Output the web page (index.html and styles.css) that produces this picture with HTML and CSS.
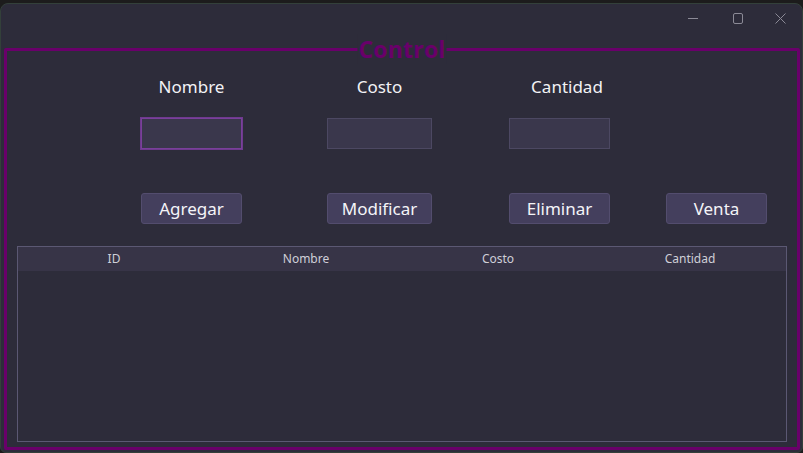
FILE: index.html
```html
<!DOCTYPE html>
<html>
<head>
<meta charset="utf-8">
<link rel="stylesheet" href="styles.css">
</head>
<body>
<div class="window">
  <div class="titlebar">
    <svg class="tb-icon tb-min" width="10" height="11" viewBox="0 0 10 11"><path d="M0 5.5H10" stroke="#8b8a96" stroke-width="1"/></svg>
    <svg class="tb-icon tb-max" width="10" height="11" viewBox="0 0 10 11"><rect x="0.5" y="0.5" width="9" height="10" rx="1.5" fill="none" stroke="#8b8a96" stroke-width="1"/></svg>
    <svg class="tb-icon" width="11" height="11" viewBox="0 0 11 11"><path d="M0.5 0.5L10.5 10.5M10.5 0.5L0.5 10.5" stroke="#8b8a96" stroke-width="1"/></svg>
  </div>
  <div class="group">
    <div class="group-title">Control</div>
    <div class="form">
      <div class="lbl ca">Nombre</div>
      <div class="lbl cb">Costo</div>
      <div class="lbl cc lbl-shift">Cantidad</div>

      <div class="field field-focus ca r2"></div>
      <div class="field cb r2"></div>
      <div class="field cc r2"></div>

      <div class="btn ca r3">Agregar</div>
      <div class="btn cb r3">Modificar</div>
      <div class="btn cc r3">Eliminar</div>
      <div class="btn cd r3">Venta</div>
    </div>
    <div class="table">
      <div class="thead">
        <div>ID</div>
        <div>Nombre</div>
        <div>Costo</div>
        <div>Cantidad</div>
      </div>
    </div>
  </div>
</div>
</body>
</html>
```

FILE: styles.css
```css
* { box-sizing: border-box; }
html, body { margin: 0; padding: 0; }
body {
  background: #1c1c1c;
  width: 803px;
  height: 453px;
  overflow: hidden;
  font-family: "Noto Sans", "Open Sans", sans-serif;
}
.window {
  margin-top: 3px;
  width: 803px;
  height: 450px;
  background: #2d2c3a;
  border: 1px solid #33403a;
  border-radius: 8px 8px 6px 6px;
  display: flex;
  flex-direction: column;
}
.titlebar {
  height: 44px;
  display: flex;
  justify-content: flex-end;
  align-items: flex-start;
  padding-top: 9px;
  padding-right: 16px;
}
.tb-icon { display: block; }
.tb-min { margin-right: 35px; }
.tb-max { margin-right: 32px; }
.group {
  position: relative;
  margin: 0 2px 2px 3px;
  flex: 1;
  border: 3px solid #69006a;
  border-radius: 2px;
  padding: 0 10px 5px 10px;
  display: flex;
  flex-direction: column;
}
.group-title {
  position: absolute;
  top: -17px;
  left: 50%;
  transform: translateX(-50%);
  background: #2d2c3a;
  color: #69006a;
  font-family: "Open Sans", sans-serif;
  font-weight: 700;
  font-size: 23px;
  line-height: 30px;
  padding: 0 1px;
  letter-spacing: 0.2px;
}
.form {
  display: grid;
  grid-template-columns: [a] 101px 85px [b] 105px 77px [c] 101px 56px [d] 101px;
  grid-template-rows: 24px 50px 75px;
  padding-left: 124px;
  padding-top: 24px;
}
.ca { grid-column: a; }
.cb { grid-column: b; }
.cc { grid-column: c; }
.cd { grid-column: d; }
.r2 { grid-row: 2; }
.r3 { grid-row: 3; }
.lbl {
  grid-row: 1;
  color: #f2f2f5;
  font-size: 17px;
  line-height: 24px;
  text-align: center;
}
.lbl-shift { padding-left: 15px; }
.field {
  align-self: end;
  height: 31px;
  background: #3a374c;
  border: 1px solid #4c4862;
}
.field-focus {
  border: 1px solid #7a3f9b;
  outline: 1px solid #6e3a8e;
}
.btn {
  align-self: end;
  height: 31px;
  background: #443f5d;
  border: 1px solid #534d6e;
  border-radius: 3px;
  color: #f4f4f8;
  font-size: 17px;
  line-height: 29px;
  text-align: center;
}
.table {
  margin-top: 22px;
  flex: 1;
  border: 1px solid #5b5873;
  background: #2d2c3a;
}
.thead {
  height: 24px;
  background: #373447;
  display: grid;
  grid-template-columns: repeat(4, 1fr);
  color: #cfcfd8;
  font-size: 12px;
  line-height: 24px;
  text-align: center;
}
```
